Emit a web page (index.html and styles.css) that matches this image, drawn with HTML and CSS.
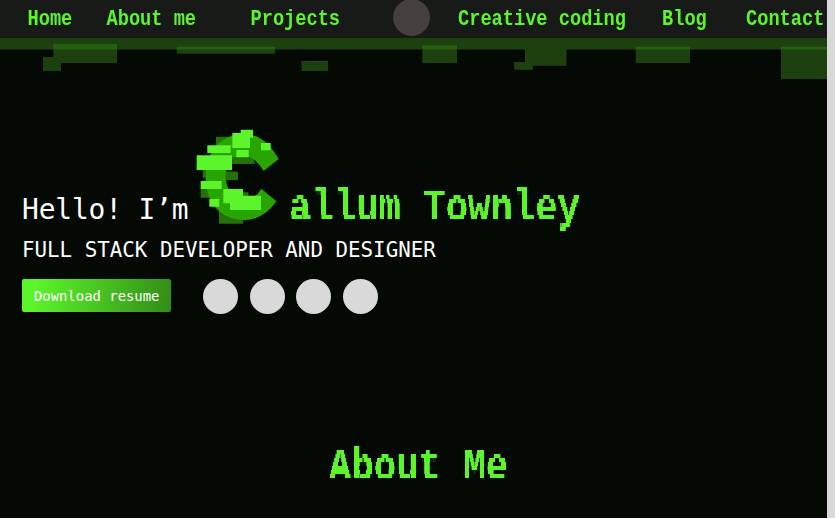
FILE: index.html
```html
<!DOCTYPE html>
<html lang="en">
<head>
<meta charset="utf-8">
<title>Callum Townley</title>
<link rel="stylesheet" href="styles.css">
</head>
<body>
<svg class="defs" width="0" height="0" aria-hidden="true">
  <!-- Samples one row of pixels in four and repeats it, for stepped letter edges. -->
  <filter id="steps" filterUnits="userSpaceOnUse" x="0" y="0" width="320" height="64" color-interpolation-filters="sRGB">
    <feFlood x="0" y="1" width="8" height="1" flood-color="#000" result="row"/>
    <feComposite in="row" in2="row" operator="over" x="0" y="0" width="8" height="4"/>
    <feTile result="rows"/>
    <feComponentTransfer in="SourceGraphic" result="sharp">
      <feFuncA type="linear" slope="2.2" intercept="-0.5"/>
    </feComponentTransfer>
    <feComposite in="sharp" in2="rows" operator="in" result="a"/>
    <feOffset in="a" dy="-1" result="b"/>
    <feOffset in="a" dy="1" result="c"/>
    <feOffset in="a" dy="2" result="d"/>
    <feMerge>
      <feMergeNode in="a"/><feMergeNode in="b"/><feMergeNode in="c"/><feMergeNode in="d"/>
    </feMerge>
  </filter>
</svg>
<div class="page">
  <nav class="nav">
    <a class="pixel home">Home</a>
    <a class="pixel about">About me</a>
    <a class="pixel projects">Projects</a>
    <span class="logo"></span>
    <a class="pixel creative">Creative coding</a>
    <a class="pixel blog">Blog</a>
    <a class="pixel contact">Contact</a>
  </nav>
  <svg class="glitch" viewBox="0 38 827 42" width="827" height="42" aria-hidden="true">
    <g fill="#1c410f">
      <path d="M0 38H827V49.5H0z"/>
      <path d="M53.3 44H117V63H61V71H43V57H53.3z"/>
      <path d="M176.7 47H275V53.7H176.7z"/>
      <path d="M301.5 61H328V71H301.5z"/>
      <path d="M422.3 45.5H457V63H422.3z"/>
      <path d="M525 49H566.5V65.7H533V69.7H514.2V62H525z"/>
      <path d="M635.8 47H690V63H635.8z"/>
      <path d="M781 47H827V79H781z"/>
    </g>
    <g fill="#265f12">
      <path d="M53.3 44H117V49.5H53.3z"/>
      <path d="M176.7 46.7H275V49.5H176.7z"/>
      <path d="M422.3 45.3H457V49.5H422.3z"/>
      <path d="M635.8 46.7H690V49.5H635.8z"/>
      <path d="M781 46.7H827V49.5H781z"/>
    </g>
  </svg>
  <main>
    <h1 class="title">
      <span class="hello">Hello! I’m</span>
      <svg class="letter" viewBox="0 0 330 330" width="110" height="110" role="img" aria-label="C">
        <path fill="#247009" d="M93 50H150V80H93zM142 100H208V131H142zM53 145H80V173H53zM110 155H158V180H110zM47 205H90V233H47zM102 250H174V311H102zM160 217H190V240H160z"/>
        <path fill="#29a503" d="M281 117Q239 42 180 42C105 42 62 97 62 171C62 247 105 300 180 300Q238 298 274 244L229 206Q212 234 190 235Q125 235 122 171Q123 111 180 108Q207 108 236 153z"/>
        <path fill="#247009" d="M142 111H192Q202 115 208 124V131H142zM122 155H158V180H122z"/>
        <path fill="#5cf42a" d="M142 39H167V29H204V53H195V84H142zM67 76H137V99H67zM35 106H141V150H35zM154 90H191V112H154zM228 69H257V91H228zM47 183H110V207H47zM73 237H103V260H73zM115 207H174V227H228V270H135V250H115z"/>
      </svg>
      <span class="stepped name"><span class="pixel-large">allum Townley</span></span>
    </h1>
    <p class="role">FULL STACK DEVELOPER AND DESIGNER</p>
    <div class="actions">
      <a class="resume">Download resume</a>
      <span class="social"></span><span class="social"></span><span class="social"></span><span class="social"></span>
    </div>
    <h2 class="section stepped"><span class="pixel-large">About Me</span></h2>
  </main>
</div>
</body>
</html>
```
FILE: styles.css
```css
* { box-sizing: border-box; }
body {
  margin: 0;
  height: 518px;
  overflow: hidden;
  background: #d9d9d9;
}
.defs { position: absolute; }
.page {
  width: 827px;
  height: 518px;
  overflow: hidden;
  background: #040904;
  color: #fff;
  font-family: "DejaVu Sans Mono", monospace;
}
.nav {
  display: flex;
  height: 38px;
  background: #181a18;
}
.pixel {
  flex: none;
  height: 36px;
  margin-top: 1px;
  color: #5cf42a;
  font: bold 18.67px/36px "Liberation Mono", monospace;
  white-space: nowrap;
  transform: scaleY(1.18);
}
.home { width: 79px; margin-left: 27.5px; }
.about { width: 144px; }
.projects { width: 142.5px; }
.logo {
  flex: none;
  width: 37px;
  height: 37px;
  margin: -1px 28px 0 0;
  border-radius: 50%;
  background: #463f40;
}
.creative { width: 204px; }
.blog { width: 84px; }
.contact { width: 80px; }
.glitch { display: block; }
.title {
  display: flex;
  height: 110px;
  margin: 40px 0 0 22px;
  font-weight: normal;
}
.hello {
  flex: none;
  width: 163px;
  padding-top: 72px;
  font-size: 27.9px;
  line-height: 36px;
  letter-spacing: -0.15px;
  white-space: nowrap;
}
.letter { flex: none; }
.stepped {
  display: block;
  width: 310px;
  height: 56px;
  filter: url(#steps);
}
.title .name { flex: none; margin: 63px 0 0 -6px; }
.pixel-large {
  display: block;
  color: #5cf42a;
  font: bold 37.3px/50px "Liberation Mono", monospace;
  white-space: nowrap;
  transform: scaleY(1.18);
}
.role {
  margin: 6px 0 0 22px;
  font-size: 20.83px;
  line-height: 28px;
}
.actions {
  display: flex;
  margin: 15px 0 0 22px;
}
.resume {
  width: 149px;
  height: 33px;
  margin-right: 32px;
  padding-left: 12px;
  border-radius: 2px;
  background: linear-gradient(100deg, #5cf42a 10%, #338b18 100%);
  font-size: 13.9px;
  line-height: 34px;
  white-space: nowrap;
}
.social {
  width: 35px;
  height: 35px;
  margin-right: 11.5px;
  border-radius: 50%;
  background: #d9d9d9;
}
.section {
  margin: 128px 0 0 329px;
}
```
